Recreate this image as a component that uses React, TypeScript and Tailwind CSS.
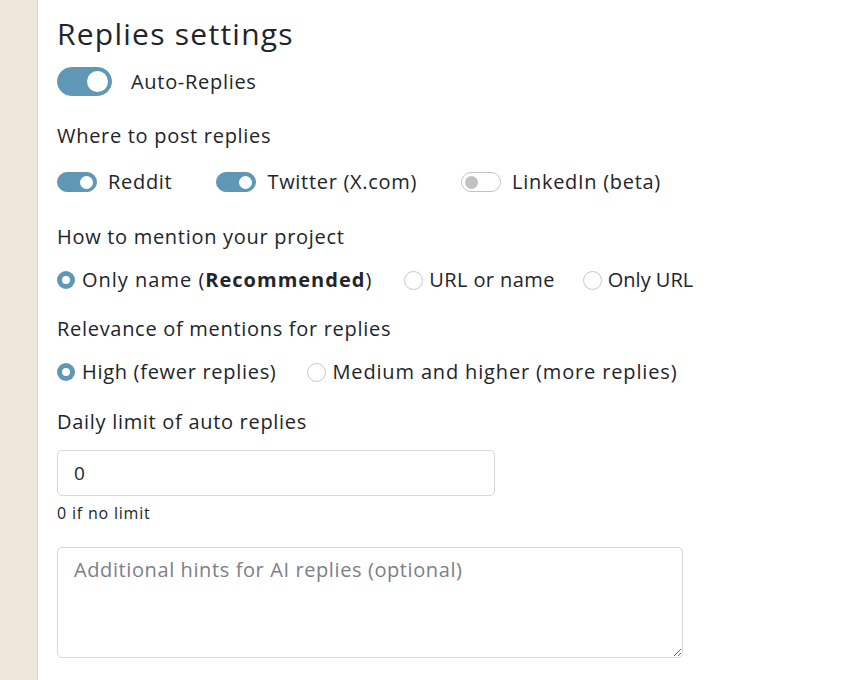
import { useState } from "react";

const font = { fontFamily: '"Open Sans", "Liberation Sans", sans-serif' };

function Toggle({ on, big = false }: { on: boolean; big?: boolean }) {
  const box = big ? "w-[55px] h-[29px]" : "w-[40px] h-[20px]";
  const knob = big ? "w-[21px] h-[21px]" : "w-[13px] h-[13px]";
  return (
    <span
      className={`inline-flex shrink-0 items-center rounded-full border px-[3px] ${box} ${
        on ? "justify-end border-[#6097b4] bg-[#6097b4]" : "justify-start border-[#c4c4c4] bg-white"
      }`}
    >
      <span className={`rounded-full ${knob} ${on ? "bg-white" : "bg-[#c2c2c2]"}`} />
    </span>
  );
}

function Radio({ on }: { on: boolean }) {
  return on ? (
    <span className="flex h-[18px] w-[18px] shrink-0 items-center justify-center rounded-full bg-[#6097b4]">
      <span className="h-[8px] w-[8px] rounded-full bg-white" />
    </span>
  ) : (
    <span className="block h-[19px] w-[19px] shrink-0 rounded-full border border-[#c8c8c8] bg-white" />
  );
}

export default function App() {
  const [limit, setLimit] = useState("0");

  return (
    <div className="flex h-[680px] overflow-hidden bg-white text-[#212529]" style={font}>
      {/* Sidebar strip */}
      <aside className="w-[38px] shrink-0 border-r border-[#c9d5dc] bg-[#eee8dc]" />

      <main className="flex-1 pl-[19px] pt-[14px] text-[20px] leading-[28px] tracking-[0.7px]">
        <h2 className="text-[30px] leading-[40px] font-medium tracking-[1.25px]">Replies settings</h2>

        <div className="mt-[13px] flex items-center gap-[19px]">
          <Toggle on big />
          <span>Auto-Replies</span>
        </div>

        <p className="mt-[26px]">Where to post replies</p>
        <div className="mt-[18px] flex items-center">
          <Toggle on />
          <span className="ml-[11px]">Reddit</span>
          <span className="ml-[44px] flex">
            <Toggle on />
          </span>
          <span className="ml-[11px]">Twitter (X.com)</span>
          <span className="ml-[44px] flex">
            <Toggle on={false} />
          </span>
          <span className="ml-[11px]">LinkedIn (beta)</span>
        </div>

        <p className="mt-[27px]">How to mention your project</p>
        <div className="mt-[15px] flex items-center">
          <Radio on />
          <span className="ml-[7px] tracking-[1px]">
            Only name (<b className="font-bold">Recommended</b>)
          </span>
          <span className="ml-[32px] flex">
            <Radio on={false} />
          </span>
          <span className="ml-[6px] tracking-[0.4px]">URL or name</span>
          <span className="ml-[28px] flex">
            <Radio on={false} />
          </span>
          <span className="ml-[6px] tracking-normal">Only URL</span>
        </div>

        <p className="mt-[21px]">Relevance of mentions for replies</p>
        <div className="mt-[15px] flex items-center">
          <Radio on />
          <span className="ml-[7px]">High (fewer replies)</span>
          <span className="ml-[31px] flex">
            <Radio on={false} />
          </span>
          <span className="ml-[6px] tracking-[0.85px]">Medium and higher (more replies)</span>
        </div>

        <p className="mt-[22px]">Daily limit of auto replies</p>
        <input
          value={limit}
          onChange={(e) => setLimit(e.target.value)}
          className="mt-[14px] block h-[46px] w-[438px] rounded-[5px] border border-[#d5d8dc] px-[16px] text-[19px] tracking-[0.5px] text-[#212529] outline-none"
          style={font}
        />
        <p className="mt-[6px] text-[16px] leading-[22px] tracking-[0.8px]">0 if no limit</p>

        <textarea
          placeholder="Additional hints for AI replies (optional)"
          className="mt-[23px] block h-[111px] w-[626px] rounded-[5px] border border-[#d5d8dc] px-[16px] py-[8px] text-[20px] leading-[28px] tracking-[0.6px] outline-none placeholder:text-[#7b8088]"
          style={font}
        />
      </main>
    </div>
  );
}
